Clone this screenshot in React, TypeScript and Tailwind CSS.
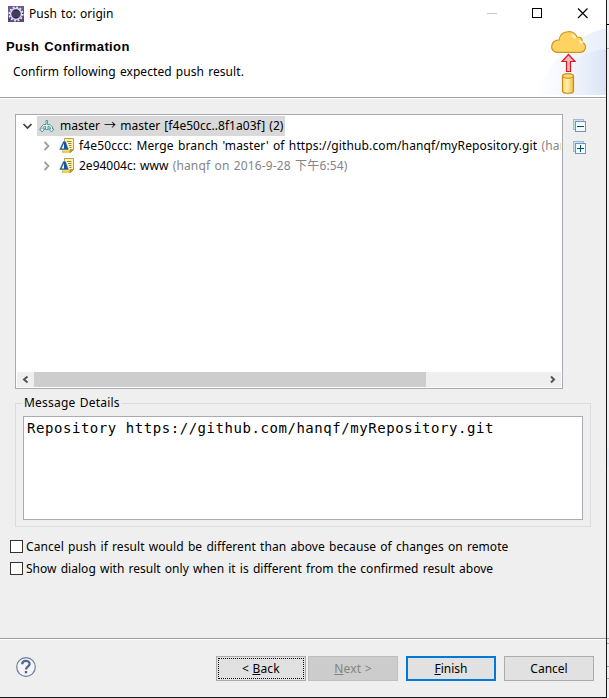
import React from "react";

const UI = "font-['Noto_Sans','Noto_Sans_CJK_SC',sans-serif]";

function AppIcon() {
  return (
    <svg width="16" height="16" viewBox="0 0 16 16">
      <rect width="16" height="16" fill="#6a5696" />
      <path d="M0 11L16 4V16H0Z" fill="#594583" />
      <circle cx="8" cy="8" r="6.7" fill="none" stroke="#eeeaf3" strokeWidth="1.8" strokeDasharray="1.8 1.71" />
      <circle cx="8" cy="8" r="5.4" fill="#30274e" stroke="#dedbe5" strokeWidth="1.5" />
      <path d="M4 6H12M3.500 8H12.500M4 10H12" stroke="#625c80" strokeWidth="0.8" />
    </svg>
  );
}

function PushBanner() {
  return (
    <svg className="block" width="76" height="68" viewBox="0 0 76 68">
      <defs>
        <linearGradient id="sweepA" x1="0" x2="1">
          <stop offset="0" stopColor="#fff" />
          <stop offset="0.3" stopColor="#f8faff" />
          <stop offset="1" stopColor="#e8eefa" />
        </linearGradient>
        <linearGradient id="sweepB" x1="0" x2="1">
          <stop offset="0" stopColor="#fff" stopOpacity="0" />
          <stop offset="1" stopColor="#dae3f6" />
        </linearGradient>
        <linearGradient id="barrel" x1="0" x2="1">
          <stop offset="0" stopColor="#ffd154" />
          <stop offset="0.4" stopColor="#fff0b5" />
          <stop offset="1" stopColor="#f5bd38" />
        </linearGradient>
      </defs>
      <path d="M4 68C22 32 46 8 76 1V68Z" fill="url(#sweepA)" />
      <path d="M10 68C28 40 48 26 76 22V68Z" fill="url(#sweepB)" />
      <path d="M27 25.300C18.500 25.300 19.500 12.500 28.500 13C30 2.500 44 2.500 46.500 10C52 10 52 13.500 51.500 15C58 18.500 54.500 25.300 49.500 25.300Z" transform="translate(0.500 0)" fill="#ffd362" stroke="#cc961d" strokeWidth="1.2" />
      <ellipse cx="44" cy="9.500" rx="2.800" ry="1.300" transform="rotate(35 44 9.500)" fill="#fff1c3" />
      <ellipse cx="51" cy="15" rx="2.300" ry="1.300" transform="rotate(30 51 15)" fill="#fff1c3" />
      <path d="M38.500 27.500L45 34.500H40.500V44.500H36.500V34.500H32Z" fill="#f7b9bc" stroke="#df1520" strokeWidth="1.200" />
      <path d="M32.500 49C32.500 46 43.500 46 43.500 49V64C43.500 67 32.500 67 32.500 64Z" fill="url(#barrel)" stroke="#c68d17" strokeWidth="1.200" />
      <ellipse cx="38" cy="49" rx="5.500" ry="2.200" fill="#ffda72" stroke="#c68d17" />
    </svg>
  );
}

function BranchIcon() {
  return (
    <svg className="ml-[2px] shrink-0" width="16" height="16" viewBox="0 0 16 16">
      <path d="M7 2.500H8.500V6.500H11L13.500 9V11H15L12.500 14L9.500 11H11.500V9.500L10 8.500H9V11.500H6.500V8.500H5.500L4 9.500V11H6L3 14L.500 11H2V9L4.500 6.500H7Z" fill="#d8f1ee" stroke="#4d9198" strokeWidth="0.900" />
    </svg>
  );
}

function CommitIcon() {
  return (
    <svg className="shrink-0" width="16" height="16" viewBox="0 0 16 16">
      <path d="M5.500 .500H14.500V11.500L11.500 14.500H3.500V11.500H5.500Z" fill="#fff3ab" stroke="#b9913a" strokeWidth="0.900" />
      <path d="M3.500 12H12L10.500 15H3.500Z" fill="#f3cf45" />
      <path d="M11 14.500V11.500H14.500Z" fill="#d99f28" stroke="#a97a22" strokeWidth="0.600" />
      <path d="M8 3.500H12.500M9 5.500H12.500M10 7.500H12.500M10.500 9.500H12.500" stroke="#8a743b" strokeWidth="0.900" />
      <path d="M0 12L4.300 3H6.700L10 12Z" fill="#185695" stroke="#fff" strokeWidth="0.500" />
      <path d="M2.500 10.500L5 5.200V10.500Z" fill="#eef7ff" />
    </svg>
  );
}

function Chevron({ down = false }: { down?: boolean }) {
  return (
    <svg className="shrink-0" width="10" height="10" viewBox="0 0 10 10" fill="none">
      {down ? <path d="M1.500 3L5.500 7L9.500 3" stroke="#404040" strokeWidth="1.700" /> : <path d="M2.500 1L6.500 5L2.500 9" stroke="#a0a0a0" strokeWidth="1.800" />}
    </svg>
  );
}

function ExpandIcon({ plus = false }: { plus?: boolean }) {
  return (
    <svg width="13" height="13" viewBox="0 0 13 13" shapeRendering="crispEdges">
      <rect x=".500" y=".500" width="10" height="10" fill="#c5e5ee" stroke="#a3b9ce" />
      <rect x="2.500" y="2.500" width="10" height="10" fill="#f2fcff" stroke="#7894b5" />
      <path d={plus ? "M4 7.500H11M7.500 4V11" : "M4 7.500H11"} stroke="#004c7b" />
    </svg>
  );
}

function ScrollArrow({ right = false }: { right?: boolean }) {
  return (
    <svg width="17" height="15" viewBox="0 0 17 15" fill="none">
      <path d={right ? "M7 4.500L10 7.500L7 10.500" : "M10.500 4.500L7 7.500L10.500 10.500"} stroke="#555" strokeWidth="2" />
    </svg>
  );
}

function CheckRow({ label, spacing }: { label: string; spacing: string }) {
  return (
    <label className="flex h-[22px] items-center">
      <span className="h-[13px] w-[13px] shrink-0 border border-[#333] bg-white" />
      <span className={`mt-[2px] ml-[3px] ${spacing}`}>{label}</span>
    </label>
  );
}

export default function App() {
  return (
    <div className={`flex h-[698px] w-[609px] overflow-hidden bg-[#efefef] text-[12px] leading-[20px] [word-spacing:1px] whitespace-pre text-black ${UI}`}>
      <main className="flex h-[698px] w-[607px] shrink-0 flex-col border-r border-b border-[#161616]">
        <header className="flex h-[97px] shrink-0 justify-between bg-white">
          <div>
            <div className="flex h-[27px] items-center pl-2">
              <AppIcon />
              <span className="ml-[5px] tracking-[0.020px]">Push to: origin</span>
            </div>
            <h1 className="mt-[10px] pl-[6px] font-['Liberation_Sans',Arial,sans-serif] text-[13px] leading-[20px] font-bold tracking-[0.380px]">Push Confirmation</h1>
            <p className="mt-[5px] pl-[13px] tracking-[0.060px]">Confirm following expected push result.</p>
          </div>
          <div className="flex flex-col items-end">
            <svg className="block" width="124" height="27" viewBox="0 0 124 27" fill="none">
              <path d="M5 13.500H15" stroke="#c8c8c8" />
              <rect x="50.500" y="8.500" width="9" height="9" stroke="#000" />
              <path d="M96 8.500L105.500 18M105.500 8.500L96 18" stroke="#000" strokeWidth="1.100" />
            </svg>
            <PushBanner />
          </div>
        </header>
        <div className="h-[2px] shrink-0 border-t border-[#9d9d9d] bg-white" />

        <div className="mt-[15px] flex h-[275px] shrink-0 pl-[15px]">
          <section className="flex h-[275px] w-[548px] flex-col border border-[#aaaab2] bg-white p-px">
            <div className="flex h-[20px] items-center pl-[5px]">
              <Chevron down />
              <div className="ml-[5px] flex h-[20px] items-center bg-[#d9d9d9] pr-[2px]">
                <BranchIcon />
                <span className="ml-[5px] tracking-[0.030px]">master → master [f4e50cc..8f1a03f] (2)</span>
              </div>
            </div>
            <div className="flex h-[20px] items-center overflow-hidden pl-[25px]">
              <Chevron />
              <span className="ml-[7px] flex"><CommitIcon /></span>
              <span className="ml-[4px] tracking-[0.130px]">f4e50ccc: Merge branch 'master' of https://github.com/hanqf/myRepository.git<span className="text-[#858585]"> (hanqf on</span></span>
            </div>
            <div className="flex h-[20px] items-center pl-[25px]">
              <Chevron />
              <span className="ml-[7px] flex"><CommitIcon /></span>
              <span className="ml-[4px]">2e94004c: www<span className="tracking-[0.150px] text-[#858585]"> (hanqf on 2016-9-28 下午6:54)</span></span>
            </div>
            <div className="mt-auto flex h-[15px] justify-between bg-[#efefef]">
              <div className="flex"><ScrollArrow /><div className="h-[15px] w-[392px] bg-[#cdcdcd]" /></div>
              <ScrollArrow right />
            </div>
          </section>
          <div className="mt-[5px] ml-[10px] flex flex-col gap-[9px]">
            <ExpandIcon />
            <ExpandIcon plus />
          </div>
        </div>

        <fieldset className="mt-[4px] ml-[15px] h-[134px] w-[576px] shrink-0 border border-[#dcdcdc] pl-[7px]">
          <legend className="-ml-px px-[2px] leading-[20px] tracking-[0.200px]">Message Details</legend>
          <div className="mt-[3px] h-[104px] w-[560px] border border-[#aaaab2] bg-white pl-[3px] font-['DejaVu_Sans_Mono',monospace] text-[14px] leading-[22px] tracking-[0.551px] [word-spacing:0px]">Repository https://github.com/hanqf/myRepository.git</div>
        </fieldset>

        <div className="mt-[8px] ml-[10px] shrink-0">
          <CheckRow label="Cancel push if result would be different than above because of changes on remote" spacing="tracking-[0.075px]" />
          <CheckRow label="Show dialog with result only when it is different from the confirmed result above" spacing="tracking-[0.025px]" />
        </div>

        <footer className="mt-auto h-[59px] shrink-0 border-t border-[#9d9d9d]">
          <div className="flex h-[58px] border-t border-white pt-[16px] pl-[16px]">
            <svg className="mt-px" width="20" height="20" viewBox="0 0 20 20" fill="none">
              <circle cx="10" cy="10" r="9.300" fill="#f5f5f6" stroke="#6b7c9d" strokeWidth="1.200" />
              <path d="M6.200 7.200C6.200 2.900 13.600 2.900 13.600 7C13.600 9.500 10 9.800 10 12.500" stroke="#506591" strokeWidth="2.300" />
              <path d="M8.800 14H11.200V16.300H8.800Z" fill="#506591" />
            </svg>
            <div className="ml-[180px] flex">
              <button className="relative h-[25px] w-[90px] border border-[#acacac] bg-[#e1e1e1] tracking-[0.200px]">
                <span className="absolute inset-[1px] border border-dotted border-black" />
                <span>{"< "}<u>B</u>ack</span>
              </button>
              <button className="ml-[2px] h-[25px] w-[90px] border border-[#bfbfbf] bg-[#cccccc] tracking-[0.200px] text-[#838383]"><u>N</u>{"ext >"}</button>
              <button className="ml-[8px] h-[25px] w-[90px] border-2 border-[#0078d7] bg-[#e1e1e1]"><u>F</u>inish</button>
              <button className="ml-[8px] h-[25px] w-[90px] border border-[#acacac] bg-[#e1e1e1]">Cancel</button>
            </div>
          </div>
        </footer>
      </main>
      <aside className="flex w-[2px] flex-col bg-[#f0f0f0]">
        <div className="mt-[24px] h-px bg-black" />
        <div className="mt-[23px] h-px bg-[#aaa]" />
        <div className="mt-[399px] h-[19px] bg-[#e0edfb]" />
        <div className="mt-[171px] h-px bg-[#a0a0a0]" />
        <div className="mt-[4px] h-px bg-[#a0a0a0]" />
        <div className="mt-[22px] h-px bg-[#a0a0a0]" />
        <div className="mt-[11px] h-px bg-[#a0a0a0]" />
      </aside>
    </div>
  );
}
